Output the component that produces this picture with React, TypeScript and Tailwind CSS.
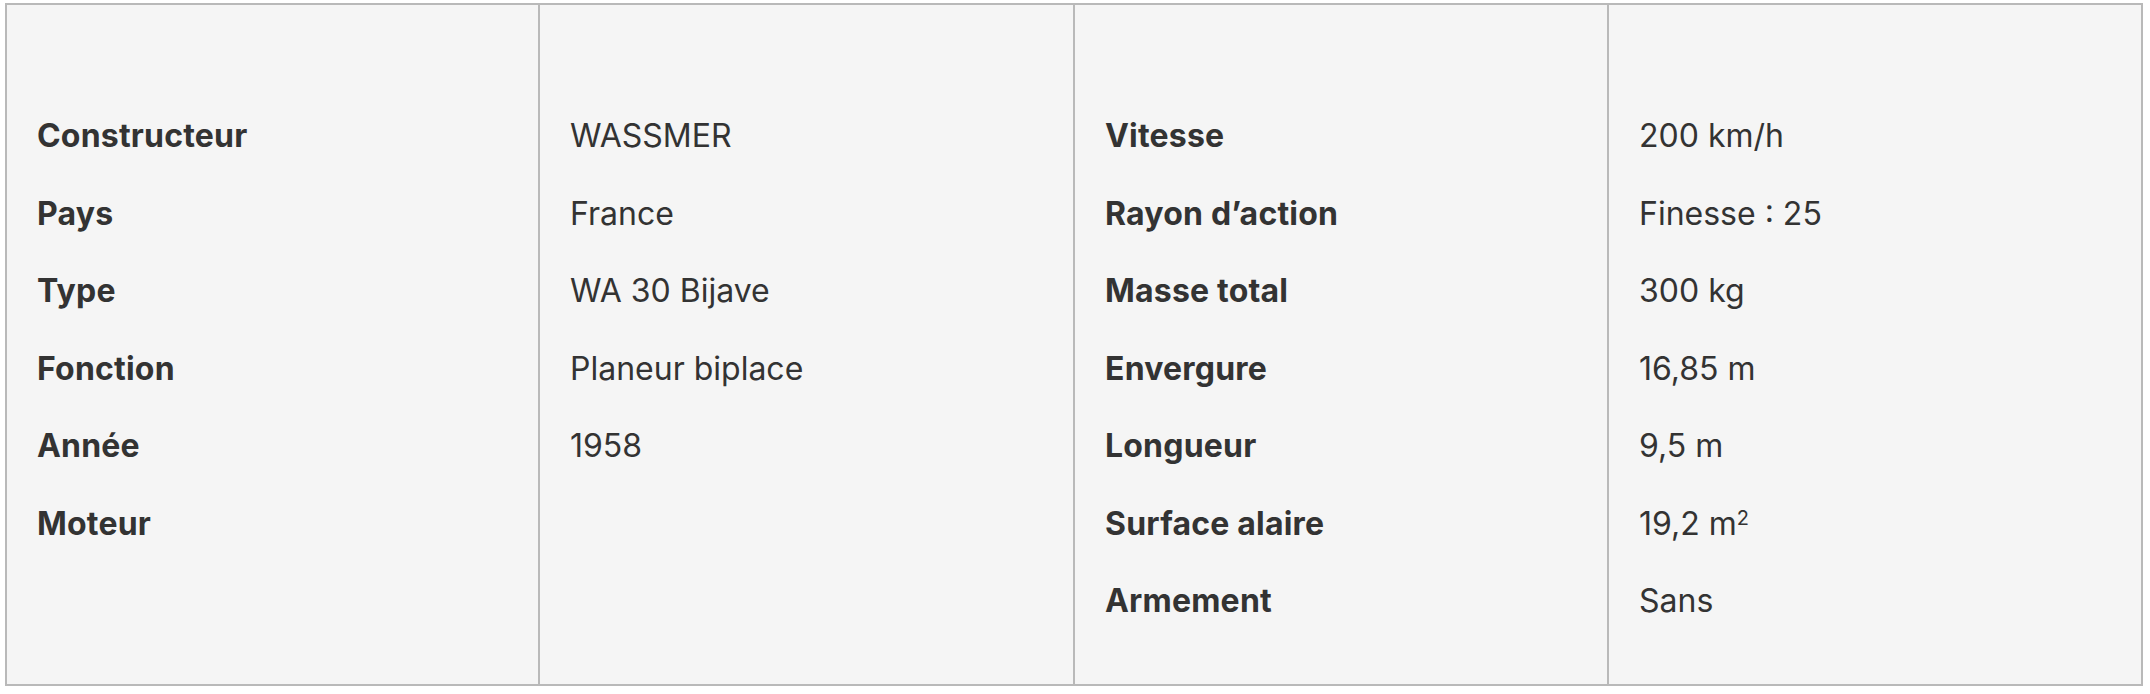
import React from "react";

type Cell = { items: React.ReactNode[]; bold?: boolean };

const cols: Cell[] = [
  { items: ["Constructeur", "Pays", "Type", "Fonction", "Année", "Moteur"], bold: true },
  { items: ["WASSMER", "France", "WA 30 Bijave", "Planeur biplace", "1958"] },
  {
    items: ["Vitesse", "Rayon d’action", "Masse total", "Envergure", "Longueur", "Surface alaire", "Armement"],
    bold: true,
  },
  {
    items: [
      "200 km/h",
      "Finesse : 25",
      "300 kg",
      "16,85 m",
      "9,5 m",
      <span key="s">
        19,2 m<sup className="text-[20px] leading-none align-baseline relative top-[-10px]">2</sup>
      </span>,
      "Sans",
    ],
  },
];

export default function App() {
  return (
    <div className="w-[2150px] h-[694px] bg-white pl-[5px] pt-[3px]" style={{ fontFamily: "Inter, 'Noto Sans', sans-serif" }}>
      <div className="w-[2138px] h-[683px] border-2 border-[#b9b9b9] bg-[#f5f5f5] grid grid-cols-[531px_535px_534px_1fr]">
        {cols.map((c, i) => (
          <div
            key={i}
            className={`${i > 0 ? "border-l-2 border-[#b9b9b9]" : ""} pl-[30px] pt-[107px] flex flex-col gap-[29.5px] text-[32px] leading-[48px] text-[#333333] ${
              c.bold ? "font-bold tracking-[0.2px]" : "font-normal"
            }`}
          >
            {c.items.map((t, j) => (
              <div key={j}>{t}</div>
            ))}
          </div>
        ))}
      </div>
    </div>
  );
}
